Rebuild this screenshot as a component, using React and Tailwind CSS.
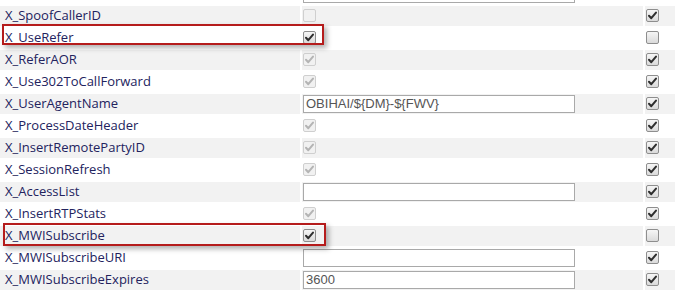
import React from 'react';

const rows = [
  { label: '', value: { type: 'input', text: '' }, def: null },
  { label: 'X_SpoofCallerID', value: { type: 'check', checked: false, disabled: true }, def: true },
  { label: 'X_UseRefer', value: { type: 'check', checked: true }, def: false },
  { label: 'X_ReferAOR', value: { type: 'check', checked: true, disabled: true }, def: true },
  { label: 'X_Use302ToCallForward', value: { type: 'check', checked: true, disabled: true }, def: true },
  { label: 'X_UserAgentName', value: { type: 'input', text: 'OBIHAI/${DM}-${FWV}' }, def: true },
  { label: 'X_ProcessDateHeader', value: { type: 'check', checked: true, disabled: true }, def: true },
  { label: 'X_InsertRemotePartyID', value: { type: 'check', checked: true, disabled: true }, def: true },
  { label: 'X_SessionRefresh', value: { type: 'check', checked: true, disabled: true }, def: true },
  { label: 'X_AccessList', value: { type: 'input', text: '' }, def: true },
  { label: 'X_InsertRTPStats', value: { type: 'check', checked: true, disabled: true }, def: true },
  { label: 'X_MWISubscribe', value: { type: 'check', checked: true }, def: false },
  { label: 'X_MWISubscribeURI', value: { type: 'input', text: '' }, def: true },
  { label: 'X_MWISubscribeExpires', value: { type: 'input', text: '3600' }, def: true },
];

const Check = ({ checked, disabled }) => (
  <div
    className={
      disabled
        ? 'w-[13px] h-[13px] rounded-[2px] border border-[#cfcfcf] bg-[#f1f1f1] flex items-center justify-center -translate-y-[1px]'
        : 'w-[13px] h-[13px] rounded-[2px] border border-[#8e8e8e] bg-gradient-to-b from-[#f6f6f6] to-[#dadada] flex items-center justify-center -translate-y-[1px]'
    }
  >
    {checked && (
      <svg width="11" height="11" viewBox="0 0 11 11">
        <path
          d="M2 5.8 L4.3 8.2 L9 2.6"
          fill="none"
          stroke={disabled ? '#b4b4b4' : '#2e2e2e'}
          strokeWidth="2"
          strokeLinecap="round"
          strokeLinejoin="round"
        />
      </svg>
    )}
  </div>
);

const TextBox = ({ text }) => (
  <div className="w-[272px] h-[18px] mt-[1px] self-start border border-[#a9a9a9] bg-white pl-[2px] text-[13px] leading-[16px] text-[#555] font-['Liberation_Sans',Arial,sans-serif]">
    {text}
  </div>
);

export default function App() {
  return (
    <div className="relative w-[675px] h-[290px] overflow-hidden bg-white">
      <div className="-mt-[16px] flex flex-col gap-y-[2px]">
        {rows.map((r, i) => {
          const bg = i % 2 === 1 ? 'bg-[#f2f2f2]' : 'bg-white';
          return (
            <div key={i} className="grid grid-cols-[300px_341px_1fr] gap-x-[2px] h-[20px]">
              <div className={`${bg} pl-[5px] flex items-center text-[13px] text-[#23235e] font-['Open_Sans',sans-serif]`}>
                {r.label}
              </div>
              <div className={`${bg} pl-[1px] flex items-center`}>
                {r.value.type === 'input' ? (
                  <TextBox text={r.value.text} />
                ) : (
                  <Check checked={r.value.checked} disabled={r.value.disabled} />
                )}
              </div>
              <div className={`${bg} pl-[1px] flex items-center`}>
                {r.def !== null && <Check checked={r.def} />}
              </div>
            </div>
          );
        })}
      </div>

      <div className="absolute left-[2px] top-[24px] w-[322px] h-[21px] border-2 border-[#b51c1c] shadow-[3px_3px_5px_rgba(0,0,0,0.3)]" />
      <div className="absolute left-[3px] top-[223px] w-[323px] h-[23px] border-2 border-[#b51c1c] shadow-[3px_3px_5px_rgba(0,0,0,0.3)]" />
    </div>
  );
}
